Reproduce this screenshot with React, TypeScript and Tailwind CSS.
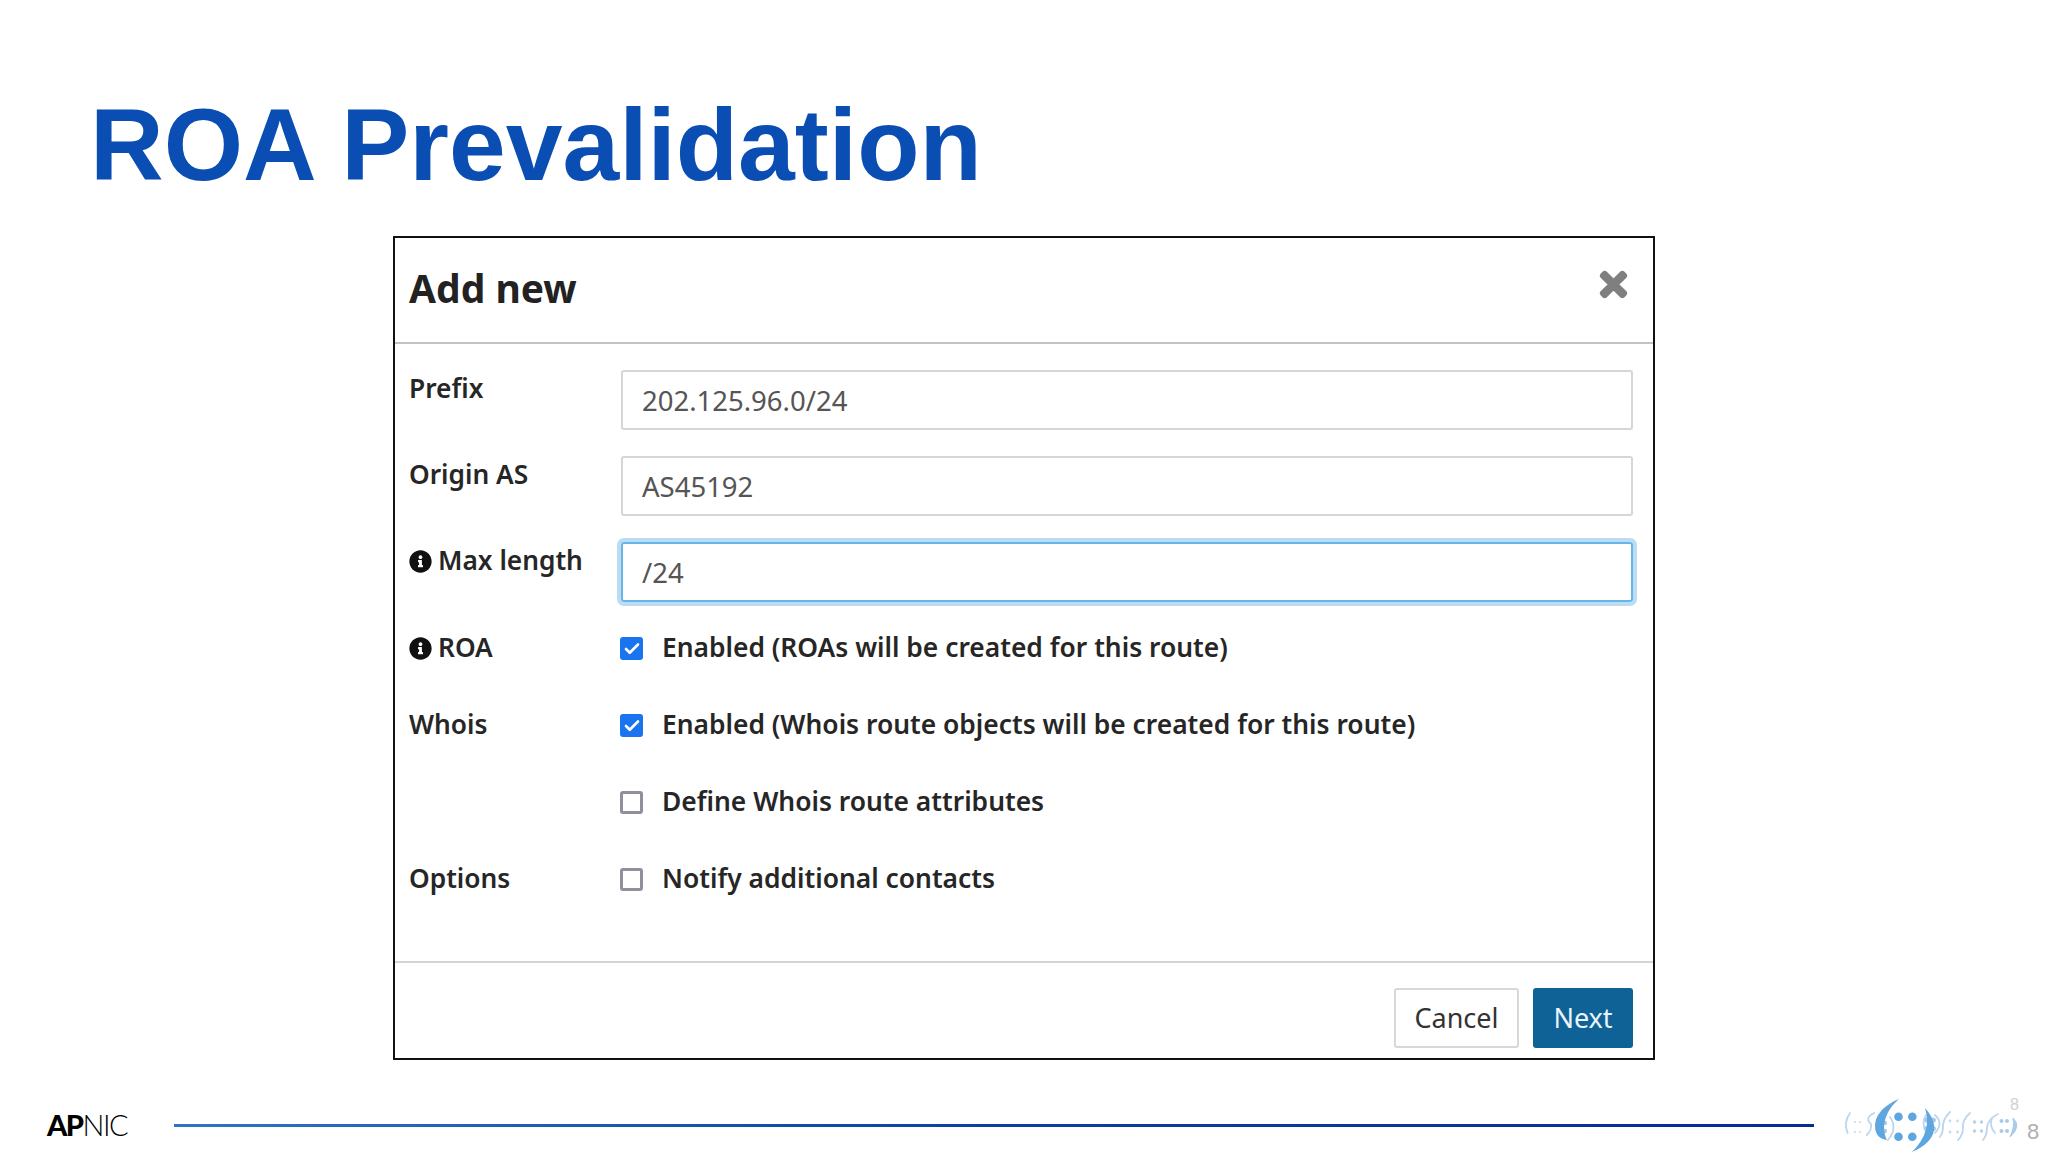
import { Check } from "lucide-react";
import { FaInfoCircle, FaTimes } from "react-icons/fa";

const sans = "font-['Noto_Sans',sans-serif]";

function FieldLabel({ text, info }: { text: string; info?: boolean }) {
  return (
    <div className="flex h-9 w-[212px] shrink-0 items-center gap-[6px] pt-[2px] text-[26.3px] font-semibold text-[#262626]">
      {info && <FaInfoCircle className="size-[23px] text-[#111]" />}
      <span>{text}</span>
    </div>
  );
}

function TextRow({ label, value, info, focused }: { label: string; value: string; info?: boolean; focused?: boolean }) {
  return (
    <div className="flex">
      <FieldLabel text={label} info={info} />
      <input
        readOnly
        value={value}
        className={
          focused
            ? "h-[60px] flex-1 rounded-[3px] border-2 border-[#68b5ea] px-[19px] text-[27.5px] text-[#555] shadow-[0_0_0_4px_#bcdcf3] outline-none"
            : "h-[60px] flex-1 rounded-[3px] border-2 border-[#d6d6d6] px-[19px] text-[27.5px] text-[#555] outline-none"
        }
      />
    </div>
  );
}

function CheckRow({ label, text, checked, info }: { label?: string; text: string; checked?: boolean; info?: boolean }) {
  return (
    <div className="flex">
      {label ? <FieldLabel text={label} info={info} /> : <div className="w-[212px] shrink-0" />}
      <div className="-ml-px flex h-9 items-start gap-[19px] text-[26.4px] font-semibold text-[#262626]">
        {checked ? (
          <span className="mt-2 flex size-[23px] items-center justify-center rounded-[3px] bg-[#1a73ef]">
            <Check className="size-[18px] text-white" strokeWidth={3.5} />
          </span>
        ) : (
          <span className="mt-2 size-[23px] rounded-[3px] border-[3px] border-[#90909c] bg-white" />
        )}
        <span className="leading-9">{text}</span>
      </div>
    </div>
  );
}

function ConferenceLogo() {
  return (
    <svg viewBox="60 25 190 57" className="h-[57px] w-[190px] shrink-0">
      <g fill="none" stroke="#bcd6ee" strokeWidth="1.8" strokeLinecap="round">
        <path d="M70 43 Q63 53 67.7 63" />
        <path d="M94.3 43 Q84 48 91 54 Q92 60 86.7 65" />
        <path d="M103 48 Q100 56 104 64" />
        <path d="M110 47 Q118 58 108 70" />
        <path d="M146 45 Q141 53 146 62" />
        <path d="M155 45 Q164 53 155 63" />
        <path d="M170 42 Q162 50 163 58 Q163 63 160 67" />
        <path d="M190 43 Q182 50 183 58 Q183 65 178 70" />
        <path d="M218 44 Q207 50 207 58 Q207 65 203 70" />
        <path d="M212 48 Q209 56 215 63" />
      </g>
      <path d="M233 48 Q242 56 230 67 Q235 56 233 48 Z" fill="#a9cbea" stroke="#a9cbea" strokeWidth="1" />
      <g fill="#c4dcf1">
        <circle cx="75" cy="52" r="1.1" />
        <circle cx="80" cy="52" r="1.1" />
        <circle cx="75" cy="62" r="1.1" />
        <circle cx="80" cy="62" r="1.1" />
        <circle cx="170" cy="51" r="1.4" />
        <circle cx="177.5" cy="51" r="1.4" />
        <circle cx="170" cy="62" r="1.4" />
        <circle cx="177.5" cy="62" r="1.4" />
        <circle cx="194.5" cy="52" r="1.7" fill="#b4d2ec" />
        <circle cx="201.5" cy="52" r="1.7" fill="#b4d2ec" />
        <circle cx="194.5" cy="61" r="1.7" fill="#b4d2ec" />
        <circle cx="201.5" cy="61" r="1.7" fill="#b4d2ec" />
        <circle cx="221.5" cy="51" r="2" fill="#a9cbea" />
        <circle cx="227" cy="51" r="2" fill="#a9cbea" />
        <circle cx="221.5" cy="61" r="2" fill="#a9cbea" />
        <circle cx="227" cy="61" r="2" fill="#a9cbea" />
        <circle cx="146.7" cy="50" r="2.6" fill="#a9cbea" />
        <circle cx="153.3" cy="50" r="2.6" fill="#a9cbea" />
        <circle cx="146.7" cy="58.5" r="2.6" fill="#a9cbea" />
        <circle cx="153.3" cy="58.5" r="2.6" fill="#a9cbea" />
        <circle cx="105" cy="53" r="2.2" fill="#a9cbea" />
        <circle cx="105" cy="61" r="2.2" fill="#a9cbea" />
      </g>
      <g fill="#5ea6e0">
        <path d="M119 29 C102 36 92 48 96 62 C98 67 101 69 107 70 C101 58 104 42 119 29 Z" />
        <path d="M145 38 C158 52 160 70 132 82 C146 68 150 54 145 38 Z" />
        <circle cx="118.5" cy="46.7" r="4.3" />
        <circle cx="132.3" cy="46.7" r="4.3" />
        <circle cx="118.5" cy="66.7" r="4.3" />
        <circle cx="132.3" cy="66.7" r="4.3" />
      </g>
    </svg>
  );
}

export default function App() {
  return (
    <div className="flex h-[1152px] w-[2048px] flex-col overflow-hidden bg-white">
      <h1 className="ml-[90px] mt-[88px] font-['Liberation_Sans',sans-serif] text-[102px] font-bold leading-[114px] text-[#0a4db3]">
        ROA Prevalidation
      </h1>

      <div className={`ml-[393px] mt-[34px] h-[824px] w-[1262px] border-2 border-[#111] ${sans}`}>
        <div className="flex h-[106px] items-start justify-between border-b-2 border-[#c4c4c4] pl-[14px] pr-[21px]">
          <h2 className="mt-[25px] text-[39px] font-bold leading-[50px] text-[#222]">Add new</h2>
          <FaTimes className="mt-[28px] size-[37px] stroke-[24px] text-[#7f7f7f]" />
        </div>

        <div className="pl-[14px] pr-[20px] pt-[26px]">
          <div className="flex flex-col gap-[26px]">
            <TextRow label="Prefix" value="202.125.96.0/24" />
            <TextRow label="Origin AS" value="AS45192" />
            <TextRow label="Max length" value="/24" info focused />
          </div>
          <div className="mt-[27px] flex flex-col gap-[41px]">
            <CheckRow label="ROA" info checked text="Enabled (ROAs will be created for this route)" />
            <CheckRow label="Whois" checked text="Enabled (Whois route objects will be created for this route)" />
            <CheckRow text="Define Whois route attributes" />
            <CheckRow label="Options" text="Notify additional contacts" />
          </div>
        </div>

        <div className="mt-[65px] flex justify-end gap-[14px] border-t-2 border-[#d4d4d4] pr-[20px] pt-[25px]">
          <button className="h-[60px] w-[125px] rounded-[3px] border-2 border-[#d8d8d8] text-[27px] text-[#333]">Cancel</button>
          <button className="h-[60px] w-[100px] rounded-[3px] bg-[#0f6296] text-[27px] text-[#eaf3fa]">Next</button>
        </div>
      </div>

      <div className="relative mt-[35px] flex h-[57px] items-center pl-[47px]">
        <div className="mt-[2px] w-[127px] shrink-0 font-['Lato',sans-serif] text-[29px] leading-none tracking-[-1.5px] text-black">
          <span className="font-black">AP</span>
          <span className="font-light">NIC</span>
        </div>
        <div className="mt-[3px] h-[3px] w-[1640px] shrink-0 bg-gradient-to-r from-[#2f73c6] via-[#0b3f9e] to-[#0a2a96]" />
        <div className="ml-[26px]">
          <ConferenceLogo />
        </div>
        <span className="absolute left-[2010px] top-[0px] font-['Liberation_Sans',sans-serif] text-[16px] leading-[20px] text-[#d0d0d0]">8</span>
        <span className="absolute left-[2027px] top-[23px] font-['Liberation_Sans',sans-serif] text-[22px] leading-[28px] text-[#b0b0b0]">8</span>
      </div>
    </div>
  );
}
